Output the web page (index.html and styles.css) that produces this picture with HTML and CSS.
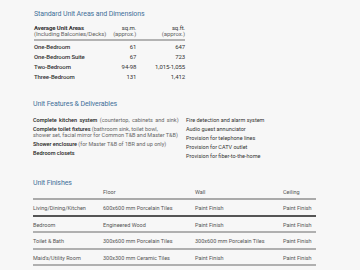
FILE: index.html
```html
<!DOCTYPE html>
<html>
<head>
<meta charset="utf-8">
<link rel="stylesheet" href="styles.css">
</head>
<body>
<div class="page">
  <section class="areas">
    <h2 class="title">Standard Unit Areas and Dimensions</h2>
    <table class="area-table">
      <thead>
        <tr>
          <th class="c-name"><span class="th-main">Average Unit Areas</span><span class="th-sub">(Including Balconies/Decks)</span></th>
          <th class="c-num"><span class="th-main">sq.m.</span><span class="th-sub">(approx.)</span></th>
          <th class="c-num c-ft"><span class="th-main">sq.ft.</span><span class="th-sub">(approx.)</span></th>
        </tr>
      </thead>
      <tbody>
        <tr><td class="c-name">One-Bedroom</td><td class="c-num">61</td><td class="c-num">647</td></tr>
        <tr><td class="c-name">One-Bedroom Suite</td><td class="c-num">67</td><td class="c-num">723</td></tr>
        <tr><td class="c-name">Two-Bedroom</td><td class="c-num">94-98</td><td class="c-num">1,015-1,055</td></tr>
        <tr><td class="c-name">Three-Bedroom</td><td class="c-num">131</td><td class="c-num">1,412</td></tr>
      </tbody>
    </table>
  </section>

  <section class="features">
    <h2 class="title">Unit Features &amp; Deliverables</h2>
    <div class="feat-cols">
      <ul class="feat-left">
        <li class="just"><b>Complete kitchen system</b> <span class="note">(countertop, cabinets and sink)</span></li>
        <li><b>Complete toilet fixtures</b> <span class="note">(bathroom sink, toilet bowl,<br>shower set, facial mirror for Common T&amp;B and Master T&amp;B)</span></li>
        <li><b>Shower enclosure</b> <span class="note">(for Master T&amp;B of 1BR and up only)</span></li>
        <li><b>Bedroom closets</b></li>
      </ul>
      <ul class="feat-right">
        <li>Fire detection and alarm system</li>
        <li>Audio guest annunciator</li>
        <li>Provision for telephone lines</li>
        <li>Provision for CATV outlet</li>
        <li>Provision for fiber-to-the-home</li>
      </ul>
    </div>
  </section>

  <section class="finishes">
    <h2 class="title">Unit Finishes</h2>
    <table class="fin-table">
      <thead>
        <tr><th class="f1"></th><th class="f2">Floor</th><th class="f3">Wall</th><th class="f4">Ceiling</th></tr>
      </thead>
      <tbody>
        <tr class="dark"><td>Living/Dining/Kitchen</td><td>600x600 mm Porcelain Tiles</td><td>Paint Finish</td><td>Paint Finish</td></tr>
        <tr><td>Bedroom</td><td>Engineered Wood</td><td>Paint Finish</td><td>Paint Finish</td></tr>
        <tr><td>Toilet &amp; Bath</td><td>300x600 mm Porcelain Tiles</td><td>300x600 mm Porcelain Tiles</td><td>Paint Finish</td></tr>
        <tr><td>Maid's/Utility Room</td><td>300x300 mm Ceramic Tiles</td><td>Paint Finish</td><td>Paint Finish</td></tr>
        <tr><td>Balcony</td><td>300x300 mm Ceramic Tiles</td><td>Paint Finish</td><td>Paint Finish</td></tr>
      </tbody>
    </table>
  </section>
</div>
</body>
</html>
```

FILE: styles.css
```css
* { box-sizing: border-box; }
html, body { margin: 0; padding: 0; }
body {
  background: #f7f7f7;
  font-family: Roboto, "Liberation Sans", sans-serif;
  color: #333;
  width: 360px;
  height: 270px;
  overflow: hidden;
}
.page {
  padding: 9px 0 0 33px;
}
.title {
  margin: 0;
  font-size: 7px;
  line-height: 10px;
  font-weight: 400;
  color: #3f7099;
  letter-spacing: -0.1px;
}

/* areas table */
.areas .title { padding-left: 1px; }
.area-table {
  margin-top: 6px;
  margin-left: 1px;
  border-collapse: collapse;
  width: 151px;
  font-size: 6px;
  letter-spacing: -0.1px;
}
.area-table th {
  font-weight: 700;
  text-align: left;
  padding: 0 0 2px 0;
  border-bottom: 2px solid #b3b3b3;
  vertical-align: bottom;
}
.th-main, .th-sub { display: block; line-height: 6px; white-space: nowrap; }
.th-sub { font-weight: 400; color: #666; }
.area-table th.c-num { text-align: right; }
.area-table td {
  height: 10px;
  line-height: 6px;
  padding: 2px 0 2px 0;
  font-weight: 500;
  color: #333;
  white-space: nowrap;
}
.area-table tbody tr:first-child td { padding-top: 3px; height: 11px; }
.area-table .c-num { text-align: right; font-weight: 400; }
.area-table .c-name { width: 72px; }
.area-table td.c-num:nth-child(2), .area-table th.c-num:nth-child(2) { width: 30px; }

/* features */
.features { margin-top: 17px; }
.feat-cols {
  display: flex;
  margin-top: 8px;
}
.feat-cols ul {
  list-style: none;
  margin: 0;
  padding: 0;
  font-size: 5.5px;
  line-height: 6px;
}
.feat-left { width: 153px; }
.feat-left li { margin-bottom: 3px; }
.feat-left b { font-weight: 500; color: #222; }
.feat-left .note { color: #666; }
.feat-left .just { word-spacing: 1px; }
.feat-right li { margin-bottom: 3px; color: #333; }

/* finishes */
.finishes { margin-top: 16px; }
.fin-table {
  margin-top: 0;
  border-collapse: collapse;
  width: 283px;
  font-size: 5.5px;
  color: #555;
}
.fin-table th {
  font-weight: 400;
  text-align: left;
  padding: 1px 0 3px 0;
  line-height: 6px;
  border-bottom: 2px solid #aaa;
}
.fin-table td {
  padding: 5px 0 3.5px 0;
  line-height: 6px;
  border-bottom: 2px solid #b0b0b0;
  white-space: nowrap;
}
.fin-table tr.dark td { border-bottom: 2px solid #555; }
.f1 { width: 70px; }
.f2 { width: 92px; }
.f3 { width: 88px; }
.f4 { width: 33px; }
```
